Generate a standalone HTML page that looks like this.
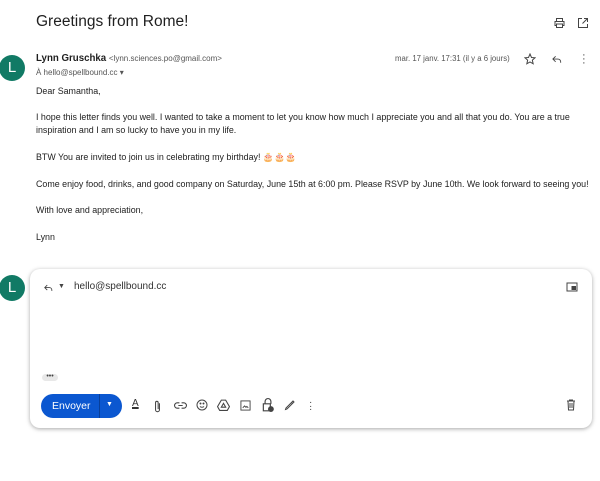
<!DOCTYPE html>
<html><head><meta charset="utf-8"><style>
*{margin:0;padding:0;box-sizing:border-box}
body{width:600px;height:481px;background:#fff;font-family:"Liberation Sans",Arial,sans-serif;color:#222;position:relative;overflow:hidden}
.a{position:absolute;white-space:nowrap}
.av{position:absolute;width:26px;height:26px;border-radius:50%;background:#117a65;color:#fff;font-size:15px;text-align:center;line-height:26px}
.t{font-size:8.9px;color:#222}
svg{position:absolute}
</style></head><body>
<div class="a" style="left:36px;top:13px;font-size:15.5px;color:#1f1f1f">Greetings from Rome!</div>
<svg style="left:553px;top:17px" width="13" height="12" viewBox="0 0 24 24" fill="none" stroke="#444" stroke-width="2"><path d="M6 9V3h12v6M6 17H3v-8h18v8h-3M6 14h12v7H6z"/></svg>
<svg style="left:577px;top:17px" width="12" height="12" viewBox="0 0 24 24" fill="none" stroke="#444" stroke-width="2"><path d="M10 3H3v18h18v-7M14 3h7v7M21 3L11 13"/></svg>
<div class="av" style="left:-1px;top:55px">L</div>
<div class="a" style="left:36px;top:53px;font-size:9.7px"><b style="color:#1f1f1f">Lynn Gruschka</b> <span style="font-size:8px;color:#555">&lt;lynn.sciences.po@gmail.com&gt;</span></div>
<div class="a" style="left:36px;top:68px;font-size:8px;color:#555">À hello@spellbound.cc ▾</div>
<div class="a" style="left:395px;top:54px;font-size:7.8px;color:#555">mar. 17 janv. 17:31 (il y a 6 jours)</div>
<svg style="left:524px;top:53px" width="12" height="12" viewBox="0 0 24 24" fill="none" stroke="#444" stroke-width="2"><path d="M12 2l3 7 7 .6-5.3 4.7 1.6 7.2L12 17.8 5.7 21.5l1.6-7.2L2 9.6 9 9z"/></svg>
<svg style="left:551px;top:54px" width="12" height="11" viewBox="0 0 24 24" fill="none" stroke="#444" stroke-width="2"><path d="M9 5L3 11l6 6M3 11h11a6 6 0 0 1 6 6v2"/></svg>
<div class="a" style="left:582px;top:53px;font-size:11px;color:#444;line-height:4px">·<br>·<br>·</div>
<div class="a t" style="left:36px;top:86px">Dear Samantha,</div>
<div class="a t" style="left:36px;top:112px">I hope this letter finds you well. I wanted to take a moment to let you know how much I appreciate you and all that you do. You are a true</div>
<div class="a t" style="left:36px;top:125px">inspiration and I am so lucky to have you in my life.</div>
<div class="a t" style="left:36px;top:152px">BTW You are invited to join us in celebrating my birthday! <span style="color:#e8a040">🎂🎂🎂</span></div>
<div class="a t" style="left:36px;top:179px">Come enjoy food, drinks, and good company on Saturday, June 15th at 6:00 pm. Please RSVP by June 10th. We look forward to seeing you!</div>
<div class="a t" style="left:36px;top:205px">With love and appreciation,</div>
<div class="a t" style="left:36px;top:232px">Lynn</div>
<div class="av" style="left:-1px;top:275px">L</div>
<div style="position:absolute;left:30px;top:269px;width:562px;height:159px;border-radius:10px;box-shadow:0 1px 4px rgba(0,0,0,.35);background:#fff"></div>
<svg style="left:43px;top:283px" width="11" height="10" viewBox="0 0 24 24" fill="none" stroke="#444" stroke-width="2.2"><path d="M9 5L3 11l6 6M3 11h11a6 6 0 0 1 6 6v2"/></svg>
<div class="a" style="left:58px;top:283px;font-size:7px;color:#444">▼</div>
<div class="a" style="left:74px;top:281px;font-size:10px;color:#333">hello@spellbound.cc</div>
<svg style="left:566px;top:282px" width="12" height="10" viewBox="0 0 24 20" fill="none" stroke="#444" stroke-width="2"><rect x="2" y="2" width="20" height="16"/><rect x="12" y="9" width="7" height="6" fill="#444"/></svg>
<div style="position:absolute;left:42px;top:374px;width:16px;height:7px;border-radius:4px;background:#e8e8e8;font-size:7px;line-height:5px;text-align:center;color:#444">•••</div>
<div style="position:absolute;left:41px;top:394px;width:81px;height:24px;border-radius:12px;background:#0b57d0"></div>
<div style="position:absolute;left:99px;top:394px;width:1px;height:24px;background:#083f9a"></div>
<div class="a" style="left:52px;top:400px;font-size:10.5px;color:#fff">Envoyer</div>
<div class="a" style="left:106px;top:401px;font-size:7px;color:#fff">▼</div>
<div class="a" style="left:132px;top:398px;font-size:10px;color:#333;text-decoration:underline;text-decoration-thickness:2px">A</div>
<svg style="left:153px;top:400px" width="9" height="13" viewBox="0 0 12 20" fill="none" stroke="#444" stroke-width="1.6"><path d="M9 5v10a3 3 0 0 1-6 0V4a2 2 0 0 1 4 0v10"/></svg>
<svg style="left:174px;top:401px" width="13" height="9" viewBox="0 0 24 14" fill="none" stroke="#444" stroke-width="2"><path d="M10 2H6a5 5 0 0 0 0 10h4M14 2h4a5 5 0 0 1 0 10h-4M8 7h8"/></svg>
<svg style="left:196px;top:399px" width="12" height="12" viewBox="0 0 24 24" fill="none" stroke="#444" stroke-width="2"><circle cx="12" cy="12" r="10"/><path d="M8 15c2 2 6 2 8 0"/><circle cx="9" cy="9" r="1"/><circle cx="15" cy="9" r="1"/></svg>
<svg style="left:217px;top:399px" width="13" height="12" viewBox="0 0 24 22" fill="none" stroke="#444" stroke-width="2"><path d="M8 2h8l7 12-4 7H5l-4-7zM12 8l-4 7h8z"/></svg>
<svg style="left:240px;top:400px" width="11" height="11" viewBox="0 0 24 24" fill="none" stroke="#444" stroke-width="2"><rect x="2" y="2" width="20" height="20"/><path d="M6 17l4-4 3 3 2-2 3 3" /></svg>
<svg style="left:262px;top:398px" width="12" height="14" viewBox="0 0 20 24" fill="none" stroke="#444" stroke-width="2"><path d="M5 10V6a5 5 0 0 1 10 0v4M2 10h12v12H2z"/><circle cx="15" cy="19" r="4" fill="#444"/></svg>
<svg style="left:284px;top:399px" width="12" height="12" viewBox="0 0 24 24" fill="none" stroke="#444" stroke-width="2"><path d="M3 21l3-1L20 6l-2-2L4 18zM15 7l2 2"/></svg>
<div class="a" style="left:309px;top:401px;font-size:10px;color:#444;line-height:3.5px">·<br>·<br>·</div>
<svg style="left:566px;top:399px" width="10" height="12" viewBox="0 0 20 24" fill="none" stroke="#444" stroke-width="2"><path d="M2 4h16M7 4V2h6v2M4 4l1 18h10l1-18M8 8v10M12 8v10"/></svg>
</body></html>
